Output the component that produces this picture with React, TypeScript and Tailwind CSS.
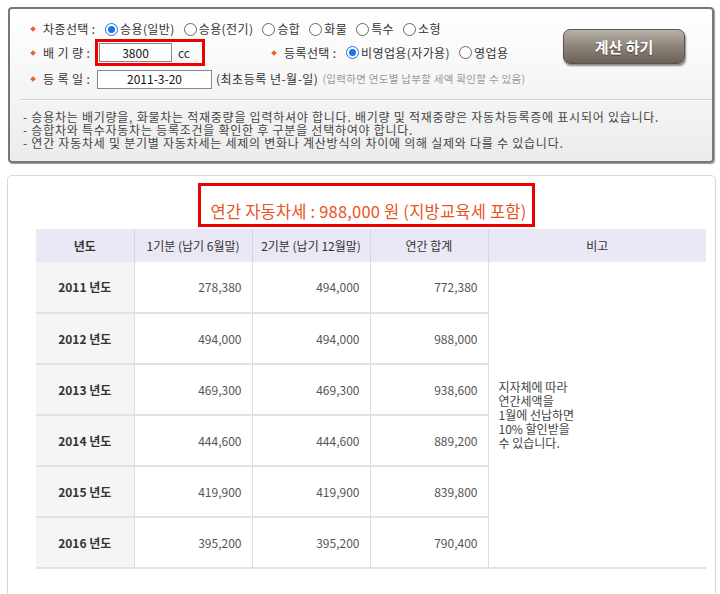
import React from "react"

const rows = [
  { year: "2011", first: "278,380", second: "494,000", total: "772,380" },
  { year: "2012", first: "494,000", second: "494,000", total: "988,000" },
  { year: "2013", first: "469,300", second: "469,300", total: "938,600" },
  { year: "2014", first: "444,600", second: "444,600", total: "889,200" },
  { year: "2015", first: "419,900", second: "419,900", total: "839,800" },
  { year: "2016", first: "395,200", second: "395,200", total: "790,400" },
]

function Bullet() {
  return <span className="inline-block w-[4px] h-[4px] rotate-45 bg-[#e8641e] shrink-0" />
}

function Radio({ checked, label }: { checked?: boolean; label: string }) {
  return (
    <span className="flex items-center gap-[2px]">
      <span
        className={`w-[13px] h-[13px] rounded-full border flex items-center justify-center bg-white ${
          checked ? "border-[#1a73e8]" : "border-[#666]"
        }`}
      >
        {checked && <span className="w-[7px] h-[7px] rounded-full bg-[#1a73e8]" />}
      </span>
      <span className="tracking-[0.4px]">{label}</span>
    </span>
  )
}

export default function App() {
  return (
    <div className="w-[720px] h-[594px] overflow-hidden bg-white text-[12px] text-[#333] font-['Noto_Sans_CJK_KR','Noto_Sans',sans-serif] leading-none">
      {/* input panel */}
      <div className="ml-[8px] mt-[7px] w-[706px] h-[156px] border-2 border-[#777] rounded-[4px] shadow-[1px_1px_1px_#999] bg-gradient-to-b from-white to-[#ececec]">
        <div className="flex">
          <div className="pl-[21px] pt-[10px] w-[540px]">
            <div className="flex items-center h-[20px]">
              <Bullet />
              <span className="ml-[8px] w-[62px] tracking-[0.4px]">차종선택 :</span>
              <div className="flex items-center gap-[9px]">
                <Radio checked label="승용(일반)" />
                <Radio label="승용(전기)" />
                <Radio label="승합" />
                <Radio label="화물" />
                <Radio label="특수" />
                <Radio label="소형" />
              </div>
            </div>
            <div className="flex items-center h-[27px]">
              <Bullet />
              <span className="ml-[8px] w-[52px] tracking-[0.4px]">배 기 량 :</span>
              <div className="w-[110px] h-[27px] border-[3px] border-[#e00] flex items-center pl-[1px]">
                <div className="w-[73px] h-[19px] border border-[#888] bg-white flex items-center justify-center text-[#111]">
                  3800
                </div>
                <span className="ml-[6px]">cc</span>
              </div>
              <div className="ml-[67px] flex items-center">
                <Bullet />
                <span className="ml-[8px] w-[62px] tracking-[0.4px]">등록선택 :</span>
                <div className="flex items-center gap-[9px]">
                  <Radio checked label="비영업용(자가용)" />
                  <Radio label="영업용" />
                </div>
              </div>
            </div>
            <div className="flex items-center h-[20px] mt-[3px]">
              <Bullet />
              <span className="ml-[8px] w-[54px] tracking-[0.4px]">등 록 일 :</span>
              <div className="w-[115px] h-[19px] border border-[#888] bg-white flex items-center justify-center text-[#111]">
                2011-3-20
              </div>
              <span className="ml-[4px] tracking-[0.5px]">(최초등록 년-월-일)</span>
              <span className="ml-[4px] text-[10.5px] text-[#999] tracking-[0.3px]">(입력하면 연도별 납부할 세액 확인할 수 있음)</span>
            </div>
          </div>
          <div className="ml-[13px] mt-[20px]">
            <button className="w-[122px] h-[35px] rounded-[7px] border border-[#5c544c] bg-gradient-to-b from-[#b8b1a8] via-[#8c8379] to-[#6a6158] text-white text-[15px] font-bold shadow-[1px_2px_2px_#888] [text-shadow:0_1px_1px_#444]">
              계산 하기
            </button>
          </div>
        </div>
        <div className="ml-[10px] mt-[10px] border-t border-[#cfcfcf] shadow-[0_1px_0_#fff]" />
        <div className="pl-[13px] pt-[10px] text-[12px] leading-[13px] text-[#444] tracking-[0.75px]">
          <div>- 승용차는 배기량을, 화물차는 적재중량을 입력하셔야 합니다. 배기량 및 적재중량은 자동차등록증에 표시되어 있습니다.</div>
          <div>- 승합차와 특수자동차는 등록조건을 확인한 후 구분을 선택하여야 합니다.</div>
          <div>- 연간 자동차세 및 분기별 자동차세는 세제의 변화나 계산방식의 차이에 의해 실제와 다를 수 있습니다.</div>
        </div>
      </div>

      {/* result panel */}
      <div className="ml-[7px] mt-[12px] w-[709px] h-[430px] border border-[#d8d8d8] rounded-[5px] pt-[7px]">
        <div className="ml-[190px] w-[337px] h-[44px] border-[3px] border-[#e00] flex items-end justify-center pb-[5px] pl-[4px]">
          <span className="text-[16.5px] text-[#e8541e] tracking-[0.2px]">연간 자동차세 : 988,000 원 (지방교육세 포함)</span>
        </div>
        <table className="ml-[28px] mt-[2px] w-[670px] border-collapse table-fixed">
          <colgroup>
            <col className="w-[98px]" />
            <col className="w-[118px]" />
            <col className="w-[118px]" />
            <col className="w-[118px]" />
            <col className="w-[218px]" />
          </colgroup>
          <thead>
            <tr className="h-[33px] bg-[#eae8f5] text-[#333]">
              <th className="font-bold border-r border-[#d6d4e6]">년도</th>
              <th className="font-normal border-r border-[#d6d4e6]">1기분 (납기 6월말)</th>
              <th className="font-normal border-r border-[#d6d4e6]">2기분 (납기 12월말)</th>
              <th className="font-normal border-r border-[#d6d4e6]">연간 합계</th>
              <th className="font-normal">비고</th>
            </tr>
          </thead>
          <tbody>
            {rows.map((r, i) => (
              <tr key={r.year} className="h-[51px] border-b-2 border-[#e2e2e2]">
                <td className="bg-[#f4f5f4] text-center font-bold text-[#333] border-r border-[#ddd]">{r.year} 년도</td>
                <td className="text-right pr-[10px] text-[#555] border-r border-[#ddd]">{r.first}</td>
                <td className="text-right pr-[10px] text-[#555] border-r border-[#ddd]">{r.second}</td>
                <td className="text-right pr-[10px] text-[#555] border-r border-[#ddd]">{r.total}</td>
                {i === 0 && (
                  <td rowSpan={6} className="pl-[10px] align-middle text-[#444] leading-[14px]">
                    <div>지자체에 따라</div>
                    <div>연간세액을</div>
                    <div>1월에 선납하면</div>
                    <div>10% 할인받을</div>
                    <div>수 있습니다.</div>
                  </td>
                )}
              </tr>
            ))}
          </tbody>
        </table>
      </div>
    </div>
  )
}
